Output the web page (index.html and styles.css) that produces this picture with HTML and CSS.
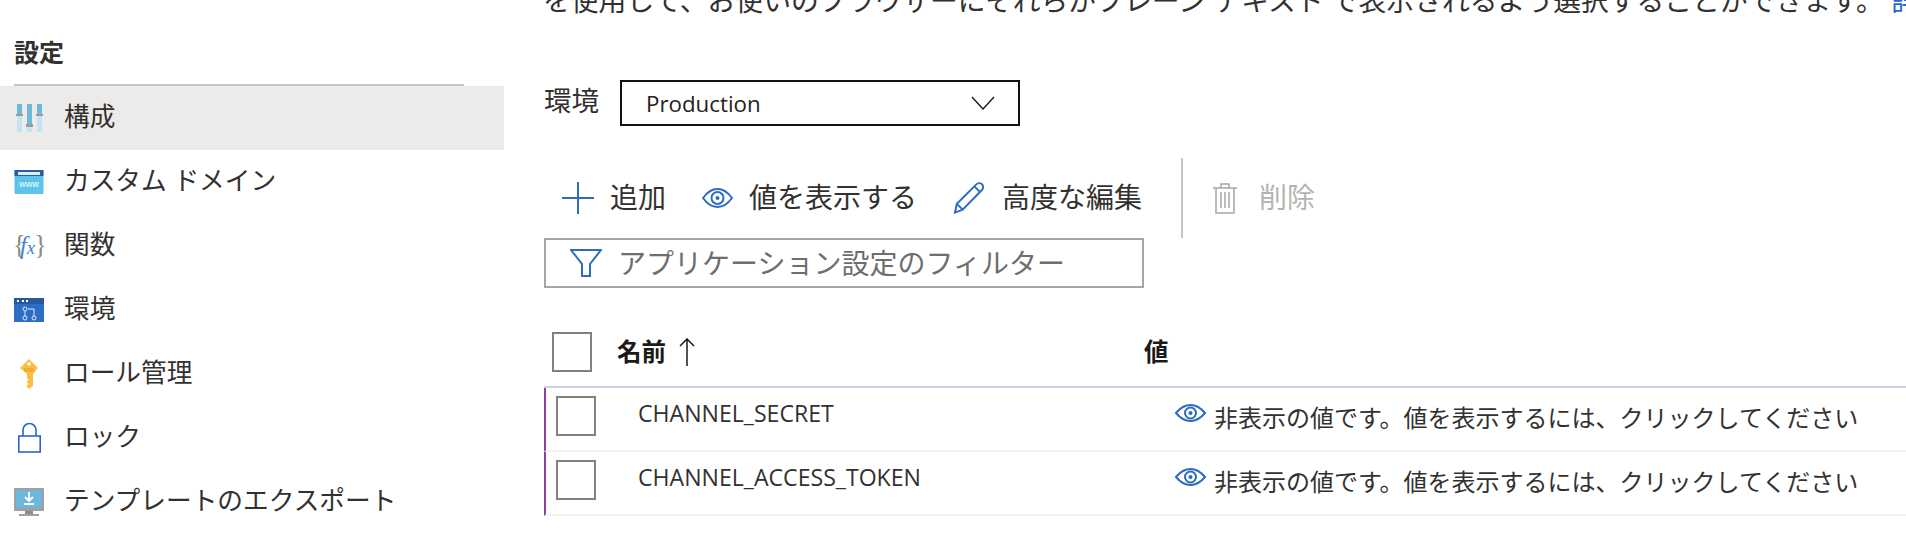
FILE: index.html
```html
<!DOCTYPE html>
<html lang="ja">
<head>
    <meta charset="UTF-8">
    <meta name="viewport" content="width=device-width, initial-scale=1.0">
    <title>構成</title>
    <link rel="stylesheet" href="styles.css">
</head>
<body>
    <nav class="sidebar">
        <h2 class="side-title">設定</h2>
        <ul class="side-list">
            <li class="side-item active">
                <svg class="side-icon" width="30" height="30" viewBox="0 0 30 30">
                    <rect x="3" y="1" width="5" height="28" fill="#c5e2f0"/>
                    <rect x="13" y="1" width="5" height="28" fill="#c5e2f0"/>
                    <rect x="23" y="1" width="5" height="28" fill="#c5e2f0"/>
                    <rect x="3" y="1" width="5" height="11" fill="#6cb8dc"/>
                    <rect x="13" y="1" width="5" height="21" fill="#6cb8dc"/>
                    <rect x="23" y="1" width="5" height="11" fill="#6cb8dc"/>
                    <rect x="2" y="11" width="7" height="2" fill="#9a9a9a"/>
                    <rect x="12" y="21" width="7" height="3" fill="#9a9a9a"/>
                    <rect x="22" y="11" width="7" height="2" fill="#9a9a9a"/>
                </svg>
                <span>構成</span>
            </li>
            <li class="side-item">
                <svg class="side-icon" width="30" height="26" viewBox="0 0 30 26">
                    <rect x="0.5" y="1" width="29" height="24" rx="1" fill="#5cc4ea"/>
                    <rect x="0.5" y="1" width="29" height="6" fill="#2a5c9e"/>
                    <rect x="4" y="3" width="22" height="3" fill="#d9eef8"/>
                    <text class="www" x="15" y="18" text-anchor="middle">www</text>
                </svg>
                <span>カスタム ドメイン</span>
            </li>
            <li class="side-item">
                <svg class="side-icon" width="32" height="28" viewBox="0 0 32 28">
                    <text class="fx-brace" x="-1" y="23">{<tspan class="fx-letter" dx="-6" dy="-1">f</tspan><tspan class="fx-letter small" dx="0">x</tspan><tspan dx="-1" dy="1">}</tspan></text>
                </svg>
                <span>関数</span>
            </li>
            <li class="side-item">
                <svg class="side-icon" width="30" height="24" viewBox="0 0 30 24">
                    <rect width="30" height="24" fill="#2b6fc4"/>
                    <rect width="30" height="6" fill="#255a9f"/>
                    <rect x="3" y="2" width="2" height="2" fill="#fff"/>
                    <rect x="8" y="2" width="2" height="2" fill="#fff"/>
                    <rect x="12" y="2" width="2" height="2" fill="#fff"/>
                    <g fill="none" stroke="#dfeaf7">
                        <circle cx="11" cy="11" r="2"/>
                        <circle cx="11" cy="20" r="2"/>
                        <circle cx="20" cy="20" r="2"/>
                        <path d="M11 13v5M20 18v-7h-6"/>
                    </g>
                </svg>
                <span>環境</span>
            </li>
            <li class="side-item">
                <svg class="side-icon" width="30" height="30" viewBox="0 0 30 30">
                    <path d="M15 0l9 9-5 6v12l-4 3-2-2v-2l2-1-2-1v-2l2-1-2-2v-4L6 9z" fill="#fbbf3f"/>
                    <circle cx="15" cy="5" r="1.8" fill="#fff"/>
                    <path d="M10 10h10M10 12h10" stroke="#e8982a" stroke-width="1"/>
                </svg>
                <span>ロール管理</span>
            </li>
            <li class="side-item">
                <svg class="side-icon" width="30" height="30" viewBox="0 0 30 30">
                    <path d="M9 13V7a6.5 6.5 0 0 1 13 0v6" fill="none" stroke="#2a63d4" stroke-width="1.6"/>
                    <rect x="4.800" y="13" width="21.400" height="16" fill="#fff" stroke="#2a63d4" stroke-width="1.600"/>
                </svg>
                <span>ロック</span>
            </li>
            <li class="side-item">
                <svg class="side-icon" width="30" height="28" viewBox="0 0 30 28">
                    <rect width="30" height="23" rx="1" fill="#a0a0a0"/>
                    <rect x="2" y="2" width="26" height="18" fill="#6fb6dc"/>
                    <rect x="11" y="23" width="8" height="3" fill="#8a8a8a"/>
                    <rect x="5" y="26" width="20" height="2" fill="#a0a0a0"/>
                    <path d="M15 4v8M11 9l4 4 4-4M10 16h10" fill="none" stroke="#fff" stroke-width="1.800"/>
                </svg>
                <span>テンプレートのエクスポート</span>
            </li>
        </ul>
    </nav>

    <main class="content">
        <p class="intro">を使用して、お使いのブラウザーにそれらがプレーン テキスト で表示されるよう選択することができます。 <a class="intro-link" href="#">詳細</a></p>

        <div class="env-row">
            <label class="env-label">環境</label>
            <div class="env-select">
                <span>Production</span>
                <svg width="24" height="14" viewBox="0 0 24 14"><path d="M1 1l11 12L23 1" fill="none" stroke="#222" stroke-width="1.500"/></svg>
            </div>
        </div>

        <div class="toolbar">
            <div class="tool">
                <svg width="32" height="32" viewBox="0 0 32 32"><path d="M16 0v32M0 16h32" stroke="#2b6cbf" stroke-width="2"/></svg>
                <span>追加</span>
            </div>
            <div class="tool">
                <svg width="31" height="20" viewBox="0 0 31 20">
                    <path d="M1 10C6 3 11 1 15.500 1S25 3 30 10c-5 7-10 9-14.500 9S6 17 1 10z" fill="none" stroke="#2b6cbf" stroke-width="2"/>
                    <circle cx="15.500" cy="10" r="6" fill="none" stroke="#2b6cbf" stroke-width="2"/>
                    <circle cx="15.500" cy="10" r="2" fill="#2b6cbf"/>
                </svg>
                <span>値を表示する</span>
            </div>
            <div class="tool">
                <svg width="33" height="32" viewBox="0 0 34 32">
                    <path d="M2 31l2-9L24 2c2-2 5-1.500 6 0s1.500 4 0 5.500L10 28z" fill="none" stroke="#2b6cbf" stroke-width="2"/>
                    <path d="M4 22l6 6M22 4l6 6" fill="none" stroke="#2b6cbf" stroke-width="2"/>
                </svg>
                <span>高度な編集</span>
            </div>
            <div class="tool-sep"></div>
            <div class="tool disabled">
                <svg width="24" height="32" viewBox="0 0 24 32">
                    <path d="M0 6h24M8 6V2h8v4M3 6v25h18V6M8 10v16M12 10v16M16 10v16" fill="none" stroke="#a6a6a6" stroke-width="1.500"/>
                </svg>
                <span>削除</span>
            </div>
        </div>

        <div class="filter">
            <svg width="32" height="28" viewBox="0 0 32 28"><path d="M1 1h30L20 15v12h-8V15z" fill="none" stroke="#2b6cbf" stroke-width="2"/></svg>
            <span>アプリケーション設定のフィルター</span>
        </div>

        <div class="table">
            <div class="table-head">
                <div class="check"></div>
                <div class="head-name">
                    <span>名前</span>
                    <svg width="16" height="28" viewBox="0 0 16 28"><path d="M8 28V1M1 8l7-7 7 7" fill="none" stroke="#1b1a19" stroke-width="1.500"/></svg>
                </div>
                <div class="head-value">値</div>
            </div>
            <div class="row">
                <div class="check"></div>
                <div class="cell-name">CHANNEL_SECRET</div>
                <div class="cell-value">
                    <svg width="31" height="18" viewBox="0 0 31 18">
                        <path d="M1 9C6 3 11 1 15.500 1S25 3 30 9c-5 6-10 8-14.500 8S6 15 1 9z" fill="none" stroke="#2b6cbf" stroke-width="2"/>
                        <circle cx="15.500" cy="9" r="5.500" fill="none" stroke="#2b6cbf" stroke-width="2"/>
                        <circle cx="15.500" cy="9" r="2" fill="#2b6cbf"/>
                    </svg>
                    <span>非表示の値です。値を表示するには、クリックしてください</span>
                </div>
            </div>
            <div class="row">
                <div class="check"></div>
                <div class="cell-name">CHANNEL_ACCESS_TOKEN</div>
                <div class="cell-value">
                    <svg width="31" height="18" viewBox="0 0 31 18">
                        <path d="M1 9C6 3 11 1 15.500 1S25 3 30 9c-5 6-10 8-14.500 8S6 15 1 9z" fill="none" stroke="#2b6cbf" stroke-width="2"/>
                        <circle cx="15.500" cy="9" r="5.500" fill="none" stroke="#2b6cbf" stroke-width="2"/>
                        <circle cx="15.500" cy="9" r="2" fill="#2b6cbf"/>
                    </svg>
                    <span>非表示の値です。値を表示するには、クリックしてください</span>
                </div>
            </div>
        </div>
    </main>
</body>
</html>
```

FILE: styles.css
```css
html, body {
    margin: 0;
    height: 536px;
    overflow: hidden;
}
body {
    display: flex;
    background-color: #fff;
    color: #323130;
    font-family: "Open Sans", "Noto Sans CJK JP", sans-serif;
}

/* left menu */
.sidebar {
    width: 504px;
    flex-shrink: 0;
    padding-top: 32px;
}
.side-title {
    margin: 0 40px 0 14px;
    height: 52px;
    border-bottom: 2px solid #c8c6c4;
    font-size: 25px;
    line-height: 40px;
    font-weight: 700;
}
.side-list {
    margin: 0;
    padding: 0;
    list-style: none;
}
.side-item {
    display: flex;
    align-items: center;
    height: 64px;
    padding-left: 14px;
    font-size: 25.7px;
}
.side-item.active {
    background-color: #edebe9;
}
.side-item span {
    margin-top: -6px;
}
.side-icon {
    width: 30px;
    margin-right: 20px;
    flex-shrink: 0;
}
.www {
    font: 9px "Liberation Sans", sans-serif;
    fill: #fff;
}
.fx-brace {
    font: 28px "Liberation Serif", serif;
    fill: #8a8a8a;
}
.fx-letter {
    font: italic 26px "Liberation Serif", serif;
    fill: #3f7fd9;
}
.fx-letter.small {
    font-size: 20px;
}

/* main area */
.content {
    flex: 1;
    min-width: 0;
    padding-left: 40px;
}
.intro {
    margin: -20px 0 0 -1px;
    height: 40px;
    line-height: 40px;
    font-size: 27.8px;
    white-space: nowrap;
}
.intro-link {
    color: #2a63d4;
    text-decoration: none;
}
.env-row {
    display: flex;
    align-items: center;
    margin-top: 60px;
    height: 46px;
}
.env-label {
    width: 76px;
    box-sizing: border-box;
    font-size: 27.5px;
    margin-top: -8px;
}
.env-select {
    display: flex;
    align-items: center;
    justify-content: space-between;
    box-sizing: border-box;
    width: 400px;
    height: 46px;
    padding: 0 23px 0 24px;
    border: 2px solid #111;
    font-size: 22.3px;
    color: #222;
}
.toolbar {
    display: flex;
    align-items: center;
    gap: 36px;
    height: 80px;
    margin-top: 32px;
    padding-left: 18px;
    font-size: 28px;
}
.tool {
    display: flex;
    align-items: center;
    gap: 16px;
}
.tool span {
    margin-top: -4px;
}
.tool-sep {
    width: 2px;
    height: 80px;
    margin-left: 3px;
    background-color: #c8c6c4;
}
.tool.disabled {
    color: #b5b3b1;
    gap: 22px;
    margin-left: -6px;
}
.filter {
    display: flex;
    align-items: center;
    gap: 16px;
    box-sizing: border-box;
    width: 600px;
    height: 50px;
    padding-left: 24px;
    border: 2px solid #a6a6a6;
    font-size: 28px;
    color: #6e6e6e;
}
.filter span {
    margin-top: -2px;
}

/* settings table */
.table {
    margin-top: 36px;
}
.check {
    width: 40px;
    height: 40px;
    box-sizing: border-box;
    border: 2px solid #808080;
    flex-shrink: 0;
}
.table-head {
    display: flex;
    align-items: flex-start;
    height: 64px;
    padding: 8px 0 0 8px;
    box-sizing: border-box;
    border-bottom: 2px solid #d0d4e2;
    font-size: 24.5px;
    font-weight: 700;
    color: #1b1a19;
}
.head-name {
    display: flex;
    align-items: center;
    gap: 13px;
    width: 527px;
    height: 40px;
    margin-left: 25px;
    line-height: 40px;
}
.head-value {
    line-height: 40px;
}
.row {
    display: flex;
    align-items: flex-start;
    height: 64px;
    box-sizing: border-box;
    padding: 8px 0 0 10px;
    border-left: 2px solid #8a3fa5;
    border-bottom: 2px solid #f3f2f1;
    font-size: 24px;
}
.cell-name {
    width: 537px;
    margin-left: 42px;
    line-height: 28px;
    margin-top: 3px;
    font-size: 23.1px;
}
.cell-value {
    display: flex;
    align-items: flex-start;
    gap: 8px;
    white-space: nowrap;
}
.cell-value svg {
    margin-top: 8px;
    flex-shrink: 0;
}
.cell-value span {
    line-height: 40px;
    margin-top: 2px;
}
```
